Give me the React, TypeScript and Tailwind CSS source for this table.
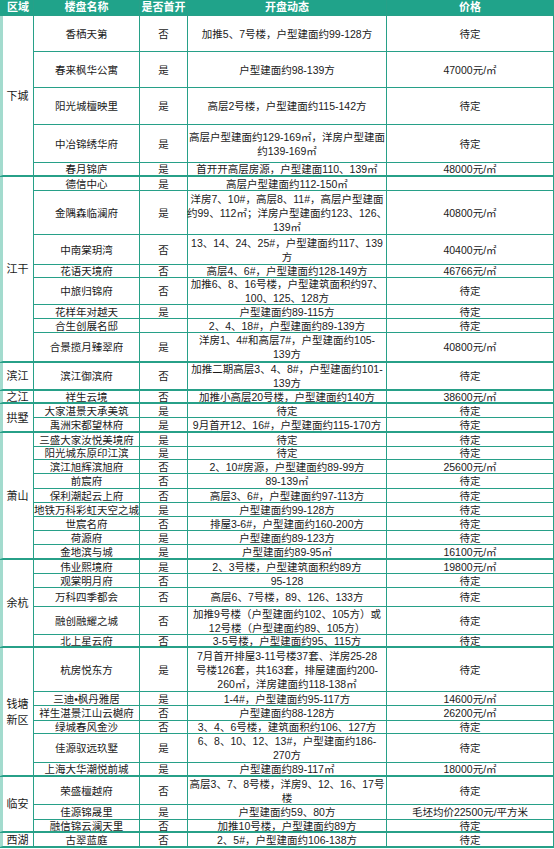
import React from "react";

type Row = {
  name: string;
  first: string;
  lines: string[];
  price: string;
  h: string;
};

type Group = { region: string[]; span: string; rows: Row[] };

const groups: Group[] = [
  {
    region: ["下城"],
    span: "row-span-5",
    rows: [
      { name: "香栖天第", first: "否", lines: ["加推5、7号楼，户型建面约99-128方"], price: "待定", h: "h-[35px]" },
      { name: "春来枫华公寓", first: "是", lines: ["户型建面约98-139方"], price: "47000元/㎡", h: "h-[35px]" },
      { name: "阳光城檀映里", first: "是", lines: ["高层2号楼，户型建面约115-142方"], price: "待定", h: "h-[36px]" },
      { name: "中冶锦绣华府", first: "是", lines: ["高层户型建面约129-169㎡，洋房户型建面", "约139-169㎡"], price: "待定", h: "h-[37px]" },
      { name: "春月锦庐", first: "是", lines: ["首开开高层房源，户型建面110、139㎡"], price: "48000元/㎡", h: "h-[13px]" },
    ],
  },
  {
    region: ["江干"],
    span: "row-span-8",
    rows: [
      { name: "德信中心", first: "是", lines: ["高层户型建面约112-150㎡"], price: "", h: "h-[13px]" },
      { name: "金隅森临澜府", first: "是", lines: ["洋房7、10#，高层8、11#，高层户型建面", "约99、112㎡；洋房户型建面约123、126、", "139㎡"], price: "40800元/㎡", h: "h-[43px]" },
      { name: "中南棠玥湾", first: "否", lines: ["13、14、24、25#，户型建面约117、139", "方"], price: "40400元/㎡", h: "h-[29px]" },
      { name: "花语天境府", first: "否", lines: ["高层4、6#，户型建面约128-149方"], price: "46766元/㎡", h: "h-[12px]" },
      { name: "中旅归锦府", first: "否", lines: ["加推6、8、16号楼，户型建筑面积约97、", "100、125、128方"], price: "待定", h: "h-[26px]" },
      { name: "花样年对越天", first: "是", lines: ["户型建面约89-115方"], price: "待定", h: "h-[13px]" },
      { name: "合生创展名邸", first: "", lines: ["2、4、18#，户型建面约89-139方"], price: "待定", h: "h-[13px]" },
      { name: "合景揽月臻翠府", first: "是", lines: ["洋房1、4#和高层7#，户型建面约105-", "139方"], price: "40800元/㎡", h: "h-[29px]" },
    ],
  },
  {
    region: ["滨江"],
    span: "row-span-1",
    rows: [
      { name: "滨江御滨府", first: "否", lines: ["加推二期高层3、4、8#，户型建面约101-", "139方"], price: "待定", h: "h-[27px]" },
    ],
  },
  {
    region: ["之江"],
    span: "row-span-1",
    rows: [
      { name: "祥生云境", first: "否", lines: ["加推小高层20号楼，户型建面约140方"], price: "38600元/㎡", h: "h-[12px]" },
    ],
  },
  {
    region: ["拱墅"],
    span: "row-span-2",
    rows: [
      { name: "大家湛景天承美筑", first: "是", lines: ["待定"], price: "待定", h: "h-[13px]" },
      { name: "禹洲宋都望林府", first: "是", lines: ["9月首开12、16#，户型建面约115-170方"], price: "待定", h: "h-[14px]" },
    ],
  },
  {
    region: ["萧山"],
    span: "row-span-9",
    rows: [
      { name: "三盛大家汝悦美境府", first: "是", lines: ["待定"], price: "待定", h: "h-[13px]" },
      { name: "阳光城东原印江滨", first: "是", lines: ["待定"], price: "待定", h: "h-[12px]" },
      { name: "滨江旭辉滨旭府", first: "否", lines: ["2、10#房源，户型建面约89-99方"], price: "25600元/㎡", h: "h-[13px]" },
      { name: "前宸府", first: "否", lines: ["89-139㎡"], price: "待定", h: "h-[14px]" },
      { name: "保利潮起云上府", first: "否", lines: ["高层3、6#，户型建面约97-113方"], price: "待定", h: "h-[13px]" },
      { name: "地铁万科彩虹天空之城", first: "是", lines: ["户型建面约99-128方"], price: "待定", h: "h-[13px]" },
      { name: "世宸名府", first: "否", lines: ["排屋3-6#，户型建面约160-200方"], price: "待定", h: "h-[13px]" },
      { name: "荷源府", first: "是", lines: ["户型建面约89-123方"], price: "待定", h: "h-[13px]" },
      { name: "金地滨与城", first: "是", lines: ["户型建面约89-95㎡"], price: "16100元/㎡", h: "h-[14px]" },
    ],
  },
  {
    region: ["余杭"],
    span: "row-span-5",
    rows: [
      { name: "伟业熙境府", first: "是", lines: ["2、3号楼，户型建筑面积约89方"], price: "19800元/㎡", h: "h-[13px]" },
      { name: "观棠明月府", first: "否", lines: ["95-128"], price: "待定", h: "h-[13px]" },
      { name: "万科四季都会", first: "否", lines: ["高层6、7号楼，89、126、133方"], price: "待定", h: "h-[18px]" },
      { name: "融创融耀之城", first: "否", lines: ["加推9号楼（户型建面约102、105方）或", "12号楼（户型建面约89、105方）"], price: "待定", h: "h-[27px]" },
      { name: "北上星云府", first: "否", lines: ["3-5号楼，户型建面约95、115方"], price: "待定", h: "h-[12px]" },
    ],
  },
  {
    region: ["钱塘", "新区"],
    span: "row-span-6",
    rows: [
      { name: "杭房悦东方", first: "是", lines: ["7月首开排屋3-11号楼37套、洋房25-28", "号楼126套，共163套，排屋建面约200-", "260㎡，洋房建面约118-138㎡"], price: "待定", h: "h-[43px]" },
      { name: "三迪•枫丹雅居", first: "是", lines: ["1-4#，户型建面约95-117方"], price: "14600元/㎡", h: "h-[13px]" },
      { name: "祥生湛景江山云樾府", first: "否", lines: ["户型建面约88-128方"], price: "26200元/㎡", h: "h-[14px]" },
      { name: "绿城春风金沙", first: "否", lines: ["3、4、6号楼，建筑面积约106、127方"], price: "待定", h: "h-[12px]" },
      { name: "佳源驭远玖墅", first: "是", lines: ["6、8、10、12、13#，户型建面约186-", "270方"], price: "待定", h: "h-[28px]" },
      { name: "上海大华潮悦前城", first: "是", lines: ["户型建面约89-117㎡"], price: "18000元/㎡", h: "h-[13px]" },
    ],
  },
  {
    region: ["临安"],
    span: "row-span-3",
    rows: [
      { name: "荣盛檀越府", first: "否", lines: ["高层3、7、8号楼，洋房9、12、16、17号", "楼"], price: "待定", h: "h-[27px]" },
      { name: "佳源锦晟里", first: "是", lines: ["户型建面约59、80方"], price: "毛坯均价22500元/平方米", h: "h-[14px]" },
      { name: "融信锦云澜天里", first: "否", lines: ["加推10号楼，户型建面约89方"], price: "待定", h: "h-[12px]" },
    ],
  },
  {
    region: ["西湖"],
    span: "row-span-1",
    rows: [
      { name: "古翠蓝庭", first: "否", lines: ["2、5#，户型建面约106-138方"], price: "待定", h: "h-[14px]" },
    ],
  },
];

const base = "bg-white flex flex-col items-center justify-center whitespace-nowrap leading-[10px] min-h-0";
const head = "h-[15px] bg-[#20a38a] text-white font-bold text-[11px] leading-[15px] flex items-center justify-center";

export default function App() {
  return (
    <div
      className="w-[554px] h-[849px] overflow-hidden bg-white text-[#1a1a1a]"
      style={{ fontFamily: '"Liberation Sans", "Noto Sans CJK SC", sans-serif' }}
    >
      <div className="grid grid-cols-[33px_105px_47px_198px_166px] gap-px bg-[#27a088] pr-px pb-px w-[554px] text-[10.5px]">
        <div className={head + " justify-start pl-[7px]"}>区域</div>
        <div className={head}>楼盘名称</div>
        <div className={head}>是否首开</div>
        <div className={head}>开盘动态</div>
        <div className={head}>价格</div>
        {groups.map((g, gi) => (
          <React.Fragment key={gi}>
            <div
              className={
                g.span +
                " min-h-0 bg-white flex flex-col items-center justify-center gap-[6px] border-l-[3px] border-l-[#a3dbce] border-b border-b-[#27a088] text-[11px] leading-[10px] pr-[1px]"
              }
            >
              {g.region.map((t, i) => (
                <div key={i}>{t}</div>
              ))}
            </div>
            {g.rows.map((r, ri) => {
              const last = ri === g.rows.length - 1;
              const c = base + " " + r.h + (last ? " border-b border-b-[#27a088]" : "");
              return (
                <React.Fragment key={ri}>
                  <div className={c}>{r.name}</div>
                  <div className={c}>{r.first}</div>
                  <div className={c}>
                    {r.lines.length === 1 ? (
                      <div>{r.lines[0]}</div>
                    ) : (
                      r.lines.map((l, i) => (
                        <div key={i} className="h-[14px] leading-[14px]">
                          {l}
                        </div>
                      ))
                    )}
                  </div>
                  <div className={c}>{r.price}</div>
                </React.Fragment>
              );
            })}
          </React.Fragment>
        ))}
      </div>
    </div>
  );
}
